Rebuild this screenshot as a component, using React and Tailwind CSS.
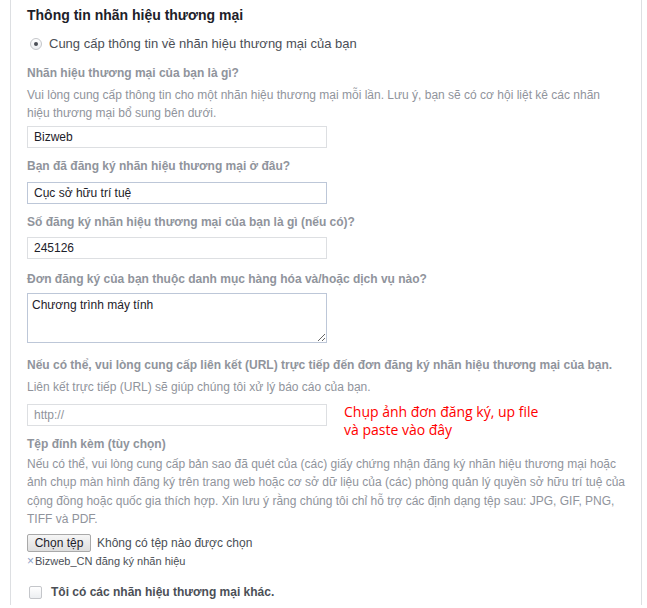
import { useState } from 'react';

const FONT = { fontFamily: '"Liberation Sans", Arial, sans-serif' };

const Label = ({ children, className = '' }) => (
  <div className={`text-[12px] font-bold text-[#90949c] leading-[16px] ${className}`}>{children}</div>
);

const Hint = ({ children, className = '' }) => (
  <div className={`text-[12px] text-[#90949c] ${className}`}>{children}</div>
);

const TextBox = ({ value, placeholder, blue }) => (
  <input
    type="text"
    defaultValue={value}
    placeholder={placeholder}
    className={`block w-[300px] h-[22px] px-[6px] text-[12px] text-[#1d2129] placeholder:text-[#90949c] bg-white border outline-none ${blue ? 'border-[#bdc7d8]' : 'border-[#dddfe2]'}`}
  />
);

export default function App() {
  const [other, setOther] = useState(false);

  return (
    <div className="h-[608px] bg-white overflow-hidden" style={FONT}>
      <div className="ml-[10px] mr-[5px] h-[605px] border-x border-[#dddfe2] pl-[16px] pr-[12px] pt-[6px]">
        <div className="text-[14px] font-bold text-[#1d2129] leading-[18px]">Thông tin nhãn hiệu thương mại</div>

        {/* lựa chọn */}
        <label className="mt-[12px] flex items-center gap-[7px] pl-[3px] cursor-pointer">
          <span className="w-[12px] h-[12px] rounded-full border border-[#c4c6ca] bg-gradient-to-b from-white to-[#eceef1] flex items-center justify-center">
            <span className="w-[4px] h-[4px] rounded-full bg-[#4b4f56]" />
          </span>
          <span className="text-[13px] text-[#4b4f56] leading-[16px]">Cung cấp thông tin về nhãn hiệu thương mại của bạn</span>
        </label>

        <Label className="mt-[13px]">Nhãn hiệu thương mại của bạn là gì?</Label>
        <Hint className="mt-[5px] pr-[24px] leading-[18px]">
          Vui lòng cung cấp thông tin cho một nhãn hiệu thương mại mỗi lần. Lưu ý, bạn sẽ có cơ hội liệt kê các nhãn hiệu thương mại bổ sung bên dưới.
        </Hint>
        <div className="mt-[4px]"><TextBox value="Bizweb" /></div>

        <Label className="mt-[10px]">Bạn đã đăng ký nhãn hiệu thương mại ở đâu?</Label>
        <div className="mt-[8px]"><TextBox value="Cục sở hữu trí tuệ" blue /></div>

        <Label className="mt-[10px]">Số đăng ký nhãn hiệu thương mại của bạn là gì (nếu có)?</Label>
        <div className="mt-[7px]"><TextBox value="245126" /></div>

        <Label className="mt-[12px]">Đơn đăng ký của bạn thuộc danh mục hàng hóa và/hoặc dịch vụ nào?</Label>
        <textarea
          defaultValue="Chương trình máy tính"
          className="mt-[6px] block w-[300px] h-[50px] px-[4px] py-[2px] text-[12px] text-[#1d2129] border border-[#bdc7d8] outline-none"
        />

        <Label className="mt-[14px]">Nếu có thể, vui lòng cung cấp liên kết (URL) trực tiếp đến đơn đăng ký nhãn hiệu thương mại của bạn.</Label>
        <Hint className="mt-[6px] leading-[16px]">Liên kết trực tiếp (URL) sẽ giúp chúng tôi xử lý báo cáo của bạn.</Hint>

        <div className="mt-[9px] flex items-start gap-[17px]">
          <TextBox placeholder="http://" />
          <div
            className="text-[14px] text-[#ff0000] leading-[18px] -mt-[1px] -mb-[20px]"
            style={{ fontFamily: '"Open Sans", "Noto Sans", sans-serif' }}
          >
            Chụp ảnh đơn đăng ký, up file
            <br />
            và paste vào đây
          </div>
        </div>

        <Label className="mt-[10px]">Tệp đính kèm (tùy chọn)</Label>
        <Hint className="mt-[3px] leading-[18.3px]">
          Nếu có thể, vui lòng cung cấp bản sao đã quét của (các) giấy chứng nhận đăng ký nhãn hiệu thương mại hoặc ảnh chụp màn hình đăng ký trên trang web hoặc cơ sở dữ liệu của (các) phòng quản lý quyền sở hữu trí tuệ của cộng đồng hoặc quốc gia thích hợp. Xin lưu ý rằng chúng tôi chỉ hỗ trợ các định dạng tệp sau: JPG, GIF, PNG, TIFF và PDF.
        </Hint>

        <div className="mt-[6px] flex items-center gap-[6px]">
          <button
            type="button"
            className="h-[18px] w-[64px] text-[12px] leading-[16px] text-[#1d2129] border border-[#a9a9a9] rounded-[2px] bg-gradient-to-b from-[#f6f6f6] to-[#dedede]"
          >
            Chọn tệp
          </button>
          <span className="text-[12px] text-[#4b4f56]">Không có tệp nào được chọn</span>
        </div>
        <div className="mt-[2px] flex items-center text-[11px] text-[#4b4f56] leading-[14px]">
          <span className="text-[#8ea0c6] text-[12px] mr-[1px]">×</span>Bizweb_CN đăng ký nhãn hiệu
        </div>

        <label className="mt-[16px] flex items-center gap-[9px] pl-[2px] cursor-pointer">
          <input
            type="checkbox"
            checked={other}
            onChange={() => setOther(!other)}
            className="appearance-none w-[13px] h-[13px] m-0 rounded-[2px] border border-[#c4c6ca] bg-gradient-to-b from-white to-[#eceef1] checked:bg-[#4267b2]"
          />
          <span className="text-[12px] font-bold text-[#4b4f56] leading-[16px]">Tôi có các nhãn hiệu thương mại khác.</span>
        </label>
      </div>
    </div>
  );
}
